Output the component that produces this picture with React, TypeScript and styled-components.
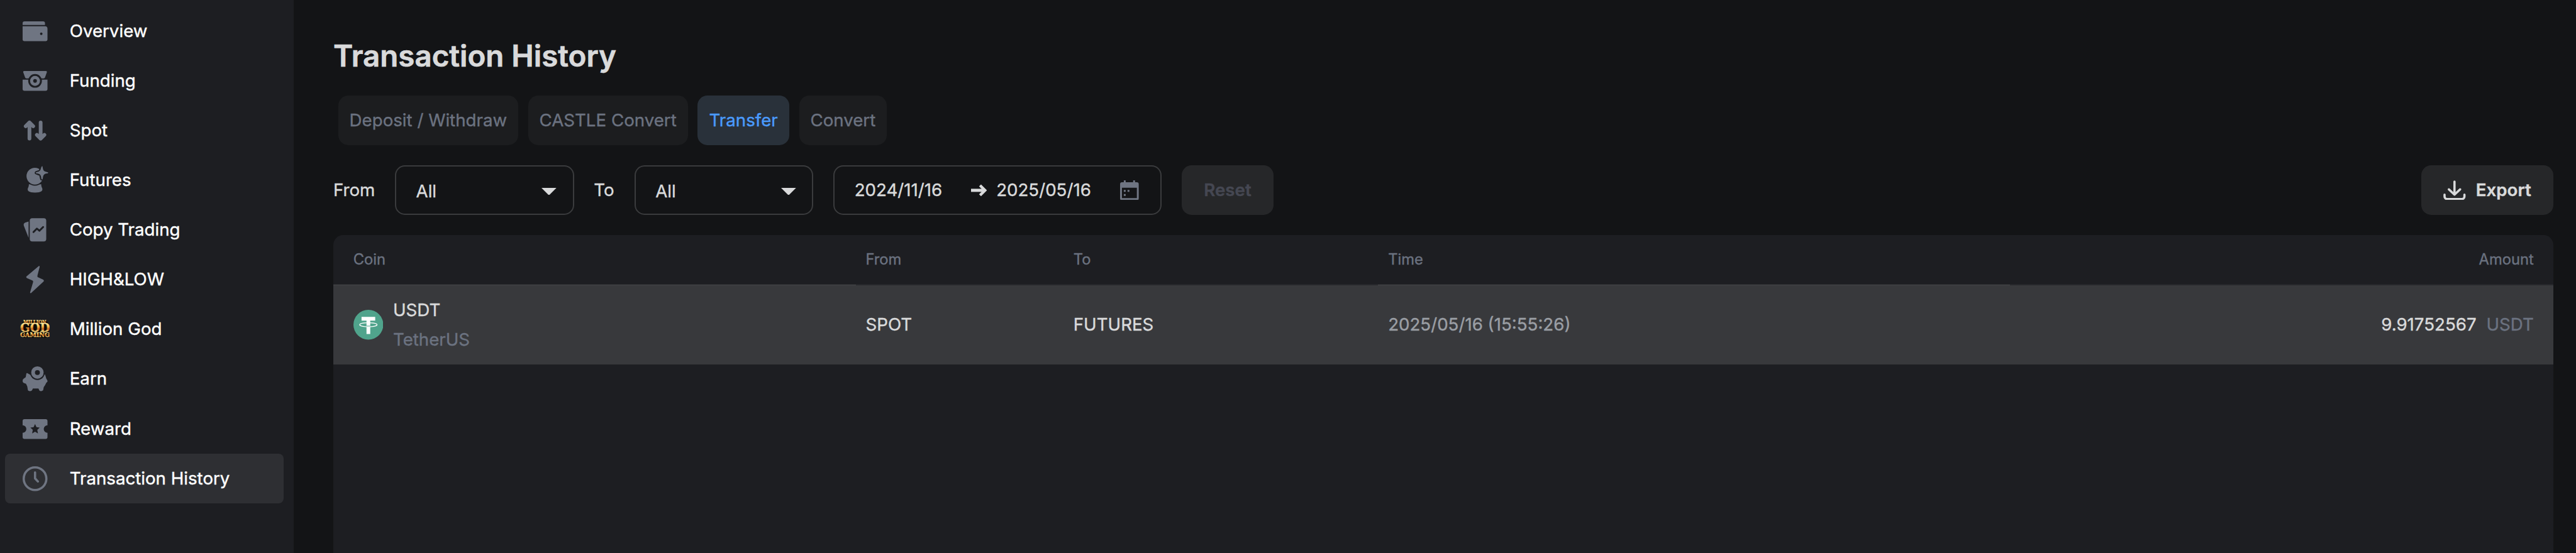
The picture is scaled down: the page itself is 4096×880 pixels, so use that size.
import React from "react";
import styled, { createGlobalStyle, css } from "styled-components";

/* Design units to CSS pixels. */
const u = (n: number) => `${+(n * (4096 / 4142)).toFixed(3)}px`;

const color = {
  page: "#131416",
  panel: "#1d1e22",
  active: "#2e2f33",
  tab: "#1c1d1f",
  tabActive: "#29313a",
  button: "#262729",
  line: "#3a3b3d",
  row: "#38393c",
  text: "#d9dadb",
  muted: "#6b7280",
  soft: "#9a9ea4",
  blue: "#4a9bff",
};

const GlobalStyle = createGlobalStyle`
  *, *::before, *::after { box-sizing: border-box; }
  html, body { margin: 0; padding: 0; background: ${color.page}; }
  body { overflow: hidden; font-family: Inter, "Liberation Sans", sans-serif; }
  button { font: inherit; border: 0; margin: 0; padding: 0; }
`;

const Page = styled.div`
  display: flex;
  width: 100%;
  height: 100vh;
  overflow: hidden;
  background: ${color.page};
  color: ${color.text};
  font-size: ${u(28)};
  line-height: ${u(48)};
  -webkit-text-stroke: 0.4px currentColor;
`;

const Sidebar = styled.nav`
  flex: none;
  display: flex;
  flex-direction: column;
  width: ${u(472)};
  padding: ${u(10)} ${u(16)} 0 ${u(8)};
  background: ${color.panel};
`;

const NavItem = styled.a<{ $active?: boolean }>`
  flex: none;
  display: flex;
  align-items: center;
  gap: ${u(32)};
  height: ${u(80)};
  padding-left: ${u(24)};
  border-radius: ${u(8)};
  background: ${(p) => (p.$active ? color.active : "transparent")};
  color: #fff;
  font-weight: 400;
  white-space: nowrap;
`;

const NavIcon = styled.svg`
  flex: none;
  width: ${u(48)};
  height: ${u(48)};
  fill: #6f7582;
  -webkit-text-stroke: 0;
`;

const Main = styled.main`
  flex: 1;
  min-width: 0;
  display: flex;
  flex-direction: column;
  padding: ${u(50)} ${u(36)} 0 ${u(64)};
`;

const Title = styled.h1`
  flex: none;
  margin: 0;
  height: ${u(80)};
  font-size: ${u(48)};
  line-height: ${u(80)};
  font-weight: 600;
  -webkit-text-stroke: 0.7px currentColor;
`;

const Tabs = styled.div`
  flex: none;
  display: flex;
  gap: ${u(16)};
  margin: ${u(24)} 0 0 ${u(8)};
`;

const Tab = styled.button<{ $active?: boolean; $w: number }>`
  width: ${(p) => u(p.$w)};
  height: ${u(80)};
  border-radius: ${u(16)};
  background: ${(p) => (p.$active ? color.tabActive : color.tab)};
  color: ${(p) => (p.$active ? color.blue : color.muted)};
  font-weight: 400;
  white-space: nowrap;
`;

const Filters = styled.div`
  flex: none;
  display: flex;
  align-items: center;
  height: ${u(80)};
  margin-top: ${u(32)};
`;

const Label = styled.span<{ $w: number }>`
  width: ${(p) => u(p.$w)};
`;

const fieldBox = css`
  display: flex;
  align-items: center;
  height: ${u(80)};
  border: 2px solid ${color.line};
  border-radius: ${u(16)};
`;

const Select = styled.div`
  ${fieldBox}
  justify-content: space-between;
  width: ${u(288)};
  margin-right: ${u(32)};
  padding: ${u(4)} ${u(26)} 0 ${u(32)};
`;

const Caret = styled.svg`
  width: ${u(24)};
  height: ${u(12)};
  fill: ${color.text};
`;

const DateRange = styled.div`
  ${fieldBox}
  width: ${u(528)};
  margin-right: ${u(32)};
  padding: 0 0 0 ${u(32)};
`;

const DateText = styled.span<{ $w: number }>`
  width: ${(p) => u(p.$w)};
  white-space: nowrap;
`;

const ArrowIcon = styled.svg`
  width: ${u(26)};
  height: ${u(22)};
  margin-right: ${u(15)};
  fill: none;
  stroke: ${color.text};
`;

const CalendarGlyph = styled.svg`
  width: ${u(30)};
  height: ${u(32)};
  fill: #6f7582;
`;

const Button = styled.button<{ $w: number; $disabled?: boolean }>`
  display: flex;
  align-items: center;
  justify-content: center;
  gap: ${u(16)};
  width: ${(p) => u(p.$w)};
  height: ${u(80)};
  border-radius: ${u(16)};
  background: ${color.button};
  color: ${(p) => (p.$disabled ? "#454752" : color.text)};
  font-weight: 600;
`;

const Spacer = styled.div`
  flex: 1;
`;

const DownloadGlyph = styled.svg`
  width: ${u(36)};
  height: ${u(32)};
  fill: none;
  stroke: ${color.text};
`;

const Table = styled.section`
  flex: 1;
  min-height: 0;
  margin-top: ${u(32)};
  border-radius: ${u(16)} ${u(16)} 0 0;
  background: ${color.panel};
  overflow: hidden;
`;

const columns = css`
  display: grid;
  grid-template-columns: ${u(840)} ${u(334)} ${u(506)} ${u(1016)} 1fr;
`;

const HeadRow = styled.div`
  ${columns}
  height: ${u(81)};
`;

const HeadCell = styled.div<{ $first?: boolean; $right?: boolean; $split?: boolean }>`
  padding: 0 ${(p) => u(p.$right ? 32 : 16)} 0 ${(p) => u(p.$first ? 32 : 16)};
  border-bottom: ${(p) => (p.$split ? "1px solid #434447" : "2px solid #27282b")};
  box-shadow: ${(p) => (p.$split ? "inset 0 -1px 0 #27282b" : "none")};
  color: ${color.muted};
  font-size: ${u(24)};
  line-height: ${u(79)};
  text-align: ${(p) => (p.$right ? "right" : "left")};
`;

const DataRow = styled.div`
  ${columns}
  height: ${u(128)};
  background: ${color.row};
`;

const Cell = styled.div<{ $first?: boolean; $right?: boolean; $soft?: boolean }>`
  display: flex;
  align-items: center;
  justify-content: ${(p) => (p.$right ? "flex-end" : "flex-start")};
  gap: ${u(16)};
  padding: 0 ${(p) => u(p.$right ? 32 : 16)} 0 ${(p) => u(p.$first ? 32 : 16)};
  color: ${(p) => (p.$soft ? color.soft : color.text)};
`;

const CoinIcon = styled.svg`
  width: ${u(48)};
  height: ${u(48)};
`;

const CoinName = styled.div`
  display: flex;
  flex-direction: column;
`;

const Muted = styled.span`
  color: ${color.muted};
`;

const BG = color.panel;

const icons: Record<string, React.ReactNode> = {
  overview: (
    <>
      <path d="M7 8H37a3 3 0 0 1 3 3V14H4V11a3 3 0 0 1 3-3Z" />
      <path d="M4 16H40a4 4 0 0 1 4 4V37a3 3 0 0 1-3 3H7a3 3 0 0 1-3-3Z" />
      <circle cx="34" cy="28" r="2" fill={BG} />
    </>
  ),
  funding: (
    <>
      <path d="M6.500 8H41.500a1.500 1.500 0 0 1 1.500 2L40 18.500a2 2 0 0 1-2 1.500H10a2 2 0 0 1-2-1.500L5 10A1.500 1.500 0 0 1 6.500 8Z" />
      <path d="M4 22H44V37a3 3 0 0 1-3 3H7a3 3 0 0 1-3-3Z" />
      <circle cx="24" cy="24" r="11" fill={BG} />
      <circle cx="24" cy="24" r="8" />
      <circle cx="24" cy="24" r="3" fill={BG} />
    </>
  ),
  spot: (
    <path
      d="M15 37V11M9 17L15 11L21 17M33 11V37M27 31L33 37L39 31"
      fill="none"
      stroke="#6f7582"
      strokeWidth="6"
      strokeLinecap="round"
      strokeLinejoin="round"
    />
  ),
  futures: (
    <>
      <path d="M14 30.500H34C33.800 33 34.500 34.500 35.500 37C37 41 34 44 24 44C14 44 11 41 12.500 37C13.500 34.500 14.200 33 14 30.500Z" />
      <circle cx="23.800" cy="17.500" r="15.300" fill={BG} />
      <circle cx="23.800" cy="17.500" r="13.500" />
      <path
        d="M34.700 3L37 9.700L43.500 12L37 14.300L34.700 22L33 15L26 12L32.300 9.700Z"
        stroke={BG}
        strokeWidth="5"
        strokeLinejoin="round"
        fill={BG}
      />
      <path d="M34.700 2C35.400 1 35.800 1 36.200 3C37 8 38 10 43 10.800C46 11.300 46 12.700 43 13.200C38 14 37.200 16 36.500 21C36 23.500 34.500 23.500 34 21C33.500 15.500 32 14 27 13.200C24.500 12.700 24.500 11.300 27 10.800C31.500 10 33 8 33.700 4Z" />
    </>
  ),
  copy: (
    <>
      <path d="M13.600 10.700V37L6 17.500C5.300 15.500 5.800 13.500 8 12.500Z" />
      <rect x="15.500" y="5.300" width="26.500" height="37.500" rx="4" />
      <path
        d="M21.500 27.500L27 22L31 25.500L37 19.500"
        fill="none"
        stroke={BG}
        strokeWidth="3"
        strokeLinecap="round"
        strokeLinejoin="round"
      />
    </>
  ),
  bolt: (
    <path
      d="M30.500 3.300L11 19.700Q10.500 20.300 11.300 20.800L20.500 25Q22.500 26 21.800 28.500L17 45L37 26.500Q37.500 26 36.700 25.300L28.500 21.500Q25.800 20 27 17Z"
      stroke="#6f7582"
      strokeWidth="2"
      strokeLinejoin="round"
    />
  ),
  god: (
    <>
      <defs>
        <linearGradient id="gold" x1="0" y1="0" x2="0" y2="1">
          <stop offset="0.150" stopColor="#fff3a8" />
          <stop offset="0.400" stopColor="#f6b84a" />
          <stop offset="0.600" stopColor="#c0601f" />
          <stop offset="0.720" stopColor="#f8d070" />
          <stop offset="1" stopColor="#fff0b0" />
        </linearGradient>
      </defs>
      <rect x="3" y="11" width="42" height="27" rx="5" fill="#0d0a06" />
      <g fill="url(#gold)" stroke="url(#gold)" strokeWidth="0.300" fontFamily="'DejaVu Serif', serif" fontWeight="700">
        <text x="5" y="14.800" fontSize="8" textLength="37" lengthAdjust="spacingAndGlyphs">MILLION</text>
        <text x="0" y="28.600" fontSize="18" textLength="48" lengthAdjust="spacingAndGlyphs">GOD</text>
        <text x="0" y="36.800" fontSize="9.500" textLength="47.500" lengthAdjust="spacingAndGlyphs">GAMING</text>
      </g>
    </>
  ),
  earn: (
    <>
      <path d="M10 16Q10 14.500 11.500 15L16 17.500H38L40 17Q41 20 42 23.500L44 27V28.500L42 30.500Q40.500 34 38 37.500L37 42.500Q35.500 44 33.500 44Q31 44 30.500 42L29.500 39.700H20.500L19.500 42Q18.500 44 16 44Q13 44 12.500 42.500L11.500 36.500L9.500 32L5.500 30.500Q4 29.500 4 27.500Q4 25 5.500 24L9 21.500Z" />
      <circle cx="27.800" cy="14" r="12" fill={BG} />
      <circle cx="27.800" cy="14" r="10" />
      <circle cx="27.800" cy="14" r="4" fill={BG} />
    </>
  ),
  reward: (
    <>
      <path d="M7 8H41a3 3 0 0 1 3 3V18a6 6 0 0 0 0 12V37a3 3 0 0 1-3 3H7a3 3 0 0 1-3-3V30a6 6 0 0 0 0-12V11a3 3 0 0 1 3-3Z" />
      <path fill={BG} d="M24 16L26.300 21L31.500 21.700L27.600 25.300L28.700 31L24 28.200L19.300 31L20.400 25.300L16.500 21.700L21.700 21Z" />
    </>
  ),
  clock: (
    <g fill="none" stroke="#6f7582" strokeWidth="3.600" strokeLinecap="round" strokeLinejoin="round">
      <circle cx="24" cy="24" r="18.200" />
      <path d="M24 14V23.500L28.500 28.500" />
    </g>
  ),
};

const navigation: { icon: string; label: string; active?: boolean }[] = [
  { icon: "overview", label: "Overview" },
  { icon: "funding", label: "Funding" },
  { icon: "spot", label: "Spot" },
  { icon: "futures", label: "Futures" },
  { icon: "copy", label: "Copy Trading" },
  { icon: "bolt", label: "HIGH&LOW" },
  { icon: "god", label: "Million God" },
  { icon: "earn", label: "Earn" },
  { icon: "reward", label: "Reward" },
  { icon: "clock", label: "Transaction History", active: true },
];

const tabs = [
  { label: "Deposit / Withdraw", width: 289 },
  { label: "CASTLE Convert", width: 257 },
  { label: "Transfer", width: 147, active: true },
  { label: "Convert", width: 141 },
];

function AllSelect() {
  return (
    <Select>
      <span>All</span>
      <Caret viewBox="0 0 24 12">
        <path d="M0 0H24L12 12Z" />
      </Caret>
    </Select>
  );
}

export default function App() {
  return (
    <Page>
      <GlobalStyle />
      <Sidebar>
        {navigation.map((item) => (
          <NavItem key={item.label} $active={item.active}>
            <NavIcon viewBox="0 0 48 48">{icons[item.icon]}</NavIcon>
            {item.label}
          </NavItem>
        ))}
      </Sidebar>
      <Main>
        <Title>Transaction History</Title>
        <Tabs>
          {tabs.map((tab) => (
            <Tab key={tab.label} $w={tab.width} $active={tab.active}>
              {tab.label}
            </Tab>
          ))}
        </Tabs>
        <Filters>
          <Label $w={99}>From</Label>
          <AllSelect />
          <Label $w={65}>To</Label>
          <AllSelect />
          <DateRange>
            <DateText $w={187}>2024/11/16</DateText>
            <ArrowIcon viewBox="0 0 26 22">
              <path d="M0 11H22" strokeWidth="5" />
              <path d="M14.500 3L22.500 11L14.500 19" strokeWidth="4.500" />
            </ArrowIcon>
            <DateText $w={199}>2025/05/16</DateText>
            <CalendarGlyph viewBox="0 0 30 32">
              <path d="M6 0H9V3H21V0H24V3H27a3 3 0 0 1 3 3V29a3 3 0 0 1-3 3H3a3 3 0 0 1-3-3V6a3 3 0 0 1 3-3H6ZM3 12V28.500H27V12Z" fillRule="evenodd" />
              <path d="M6 15.500H9V18.500H6ZM12 15.500H15V18.500H12ZM6 22H9V25H6Z" />
            </CalendarGlyph>
          </DateRange>
          <Button $w={148} $disabled>
            Reset
          </Button>
          <Spacer />
          <Button $w={213}>
            <DownloadGlyph viewBox="0 0 36 32">
              <path
                d="M18 2V23M9 14.500L18 23L27 14.500M2 23V26a4 4 0 0 0 4 4H30a4 4 0 0 0 4-4V23"
                strokeWidth="3.600"
                strokeLinecap="round"
                strokeLinejoin="round"
              />
            </DownloadGlyph>
            Export
          </Button>
        </Filters>
        <Table>
          <HeadRow>
            <HeadCell $first $split>Coin</HeadCell>
            <HeadCell>From</HeadCell>
            <HeadCell>To</HeadCell>
            <HeadCell $split>Time</HeadCell>
            <HeadCell $right>Amount</HeadCell>
          </HeadRow>
          <DataRow>
            <Cell $first>
              <CoinIcon viewBox="0 0 48 48">
                <circle cx="24" cy="24" r="24" fill="#50a48c" />
                <path d="M13 11.500H35V17.500H27V39H21V17.500H13Z" fill="#fff" />
                <ellipse cx="24" cy="24" rx="14" ry="3.200" fill="none" stroke="#fff" strokeWidth="1.200" />
                <path d="M21 25.700H27V26.700H21Z" fill="#50a48c" />
              </CoinIcon>
              <CoinName>
                <span>USDT</span>
                <Muted>TetherUS</Muted>
              </CoinName>
            </Cell>
            <Cell>SPOT</Cell>
            <Cell>FUTURES</Cell>
            <Cell $soft>2025/05/16 (15:55:26)</Cell>
            <Cell $right>
              <span>9.91752567</span>
              <Muted>USDT</Muted>
            </Cell>
          </DataRow>
        </Table>
      </Main>
    </Page>
  );
}
